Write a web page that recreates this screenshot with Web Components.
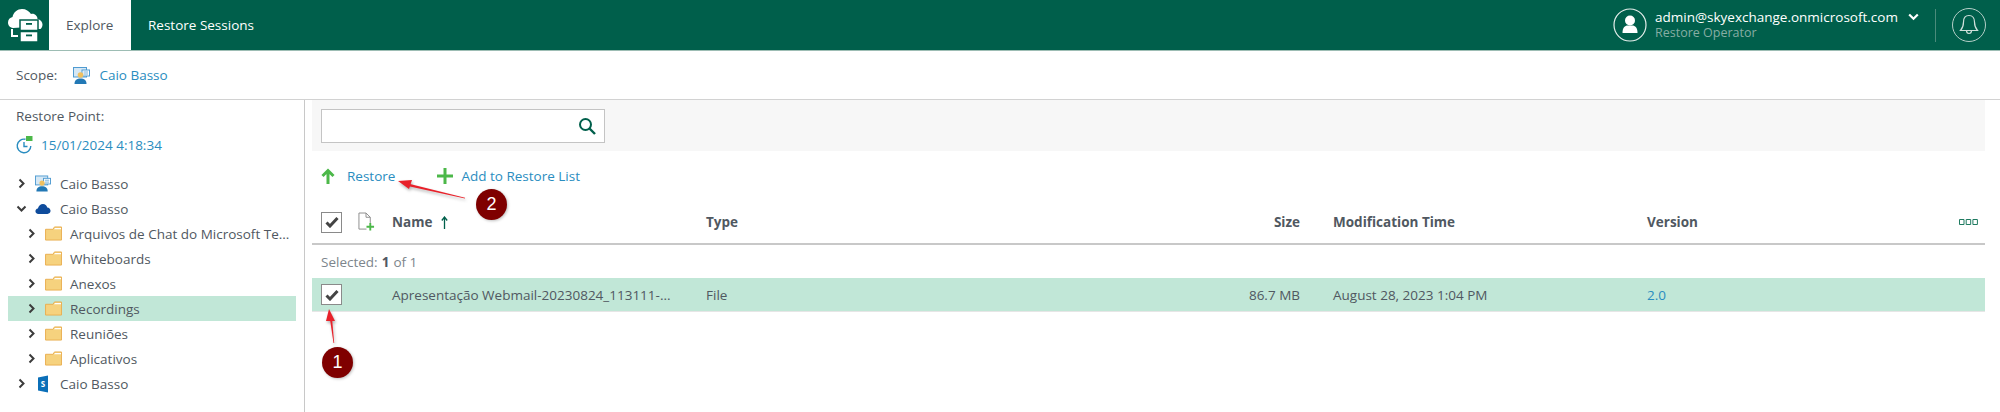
<!DOCTYPE html>
<html>
<head>
<meta charset="utf-8">
<title>Explore</title>
<style>
	html, body { margin: 0; padding: 0; background: #fff; }
	body { font: 13.5px "Open Sans", sans-serif; color: #505861; width: 2000px; height: 412px; overflow: hidden; position: relative; }
	.body-row { display: flex; height: 312px; }
</style>
</head>
<body>
<app-header></app-header>
<scope-bar></scope-bar>
<div class="body-row">
	<side-tree></side-tree>
	<file-pane></file-pane>
</div>
<call-outs></call-outs>

<script>
const ICONS = {
	mailbox: `<svg width="17" height="17" viewBox="0 0 17 17">
		<rect x="0.500" y="0.500" width="13" height="9.500" fill="#d6e8f5" stroke="#4f9bd1"/>
		<rect x="9" y="3" width="7.500" height="6" fill="#fff" stroke="#4f9bd1"/><path d="M10.500 5h4.500M10.500 7h4.500" stroke="#4f9bd1" stroke-width=".8"/>
		<circle cx="7.500" cy="8" r="2.800" fill="#f0c060"/><path d="M1.500 17c0-4 2.500-5.500 6-5.500s6 1.500 6 5.500z" fill="#2278b5"/></svg>`,
	cloud: `<svg width="17" height="12" viewBox="0 0 18 12"><path d="M4 11.500C1.500 11.500.5 10 .5 8.500c0-1.500 1-2.800 2.700-3C4 2.500 6.300.5 9 .5c2.500 0 4 1.500 4.800 3.700 2 .2 3.700 1.800 3.700 3.900 0 2-1.500 3.400-3.500 3.400z" fill="#0f4c9c"/></svg>`,
	share: `<svg width="12" height="18" viewBox="0 0 12 18"><path d="M1 2.500 11 .5v17l-10-2z" fill="#0b6fb8"/><text x="6" y="12" font-family="Open Sans" font-size="8" font-weight="700" text-anchor="middle" fill="#fff">S</text></svg>`,
	folder: `<svg width="17" height="15" viewBox="0 0 18 16"><path d="M.5 3.500h8l1.500-2.500h7.500v14H.5z" fill="#f6d27e" stroke="#e9ae4f"/><path d="M9.500 3.500 10.700 2H17v1.500z" fill="#fff"/></svg>`
};

class AppHeader extends HTMLElement {
	constructor() {
		super();
		this.attachShadow({ mode: "open" });
		this.shadowRoot.innerHTML = `
			<style>
				:host { display: flex; height: 51px; background: #005f4b; border-bottom: 1px solid #9dbdb4; box-sizing: border-box; color: #fff; font-size: 13.5px; }
				.logo { width: 49px; display: flex; align-items: center; justify-content: center; }
				.tab { display: flex; align-items: center; padding: 0 17px; }
				.tab.on { background: #fff; color: #505861; width: 82px; box-sizing: border-box; }
				.grow { flex: 1; }
				.user { display: flex; align-items: center; }
				.avatar { width: 34px; height: 34px; margin-right: 8px; }
				.who { line-height: 16px; width: 280px; }
				.mail { display: flex; align-items: center; gap: 10px; white-space: nowrap; }
				.mail svg { flex: none; }
				.role { color: #86ada3; font-size: 12.5px; }
				.sep { width: 1px; height: 33px; background: #4b8b7b; margin-right: 16px; }
				.bell { width: 34px; height: 34px; margin-right: 14px; }
			</style>
			<div class="logo">
				<svg width="36" height="36" viewBox="0 0 36 36">
					<path d="M6 21C2.500 20.500 1 18 1 15.500 1 12.500 3 10.500 5.500 10 6.500 5 10.500 2 15 2c4 0 7 2 9 5 1-.5 2-.5 3 0 2.500 1 3.500 3 3.500 5 3 .5 5 3 5 5.500 0 2-1 3.500-2 4.500H14v-1.500z" fill="#fff"/>
					<rect x="13" y="13" width="18" height="10.500" fill="#fff" stroke="#005f4b" stroke-width="1.500"/>
					<rect x="13" y="24.500" width="18" height="10.500" fill="#fff" stroke="#005f4b" stroke-width="1.500"/>
					<rect x="19" y="16" width="6" height="1.800" fill="#005f4b"/><rect x="19" y="27.500" width="6" height="1.800" fill="#005f4b"/>
					<path d="M5 22v7h6" fill="none" stroke="#fff" stroke-width="2"/>
				</svg>
			</div>
			<div class="tab on">Explore</div>
			<div class="tab">Restore Sessions</div>
			<div class="grow"></div>
			<div class="user">
				<svg class="avatar" viewBox="0 0 34 34"><circle cx="17" cy="17" r="16" fill="none" stroke="#e4eeeb" stroke-width="1.200"/><circle cx="17" cy="12.500" r="5" fill="#fff"/><path d="M9.500 25c0-5 2-7 4.500-7.500h6c2.500.5 4.500 2.500 4.500 7.500z" fill="#fff"/></svg>
				<div class="who">
					<div class="mail">admin@skyexchange.onmicrosoft.com
						<svg width="11" height="8" viewBox="0 0 11 8"><path d="M1.200 1.500 5.500 5.800 9.800 1.500" fill="none" stroke="#fff" stroke-width="2.200"/></svg>
					</div>
					<div class="role">Restore Operator</div>
				</div>
				<div class="sep"></div>
				<svg class="bell" viewBox="0 0 34 34"><circle cx="17" cy="17" r="16.500" fill="none" stroke="#b5cfc8" stroke-width="1"/><path d="M17 7.500c-3.500 0-5.500 2.800-5.500 6.500 0 4-.8 6-3 8.500h17c-2.200-2.500-3-4.500-3-8.500 0-3.700-2-6.500-5.500-6.500zM14.500 22.500c0 2 1 3 2.500 3s2.500-1 2.500-3" fill="none" stroke="#cfe0db" stroke-width="1.200"/></svg>
			</div>`;
	}
}

class ScopeBar extends HTMLElement {
	constructor() {
		super();
		this.attachShadow({ mode: "open" });
		this.shadowRoot.innerHTML = `
			<style>
				:host { display: flex; align-items: center; height: 49px; box-sizing: border-box; border-bottom: 1px solid #d2d2d2; padding: 0 0 0 16px; color: #505861; font-size: 13.5px; }
				.ico { margin: 0 9px 0 16px; display: flex; }
				a { color: #2a8dc0; }
			</style>
			<span>Scope:</span><span class="ico">${ICONS.mailbox}</span><a>Caio Basso</a>`;
	}
}

class TreeItem extends HTMLElement {
	constructor() {
		super();
		this.attachShadow({ mode: "open" });
		const level = +this.getAttribute("level") || 0;
		const open = this.hasAttribute("open");
		const sel = this.hasAttribute("selected");
		const icon = ICONS[this.getAttribute("icon")] || "";
		const chev = open ? "M1.500 3.500 5.500 7.500 9.500 3.500" : "M3.500 1.500 7.500 5.500 3.500 9.500";
		this.shadowRoot.innerHTML = `
			<style>
				:host { display: flex; align-items: center; height: 25px; font-size: 13.5px; color: #505861; white-space: nowrap; margin: 0 8px; padding-left: ${level ? 18 : 8}px; ${sel ? "background:#c1e7d7;" : ""} }
				svg.chev { flex: none; margin-right: 8px; }
				.ico { flex: none; width: ${level ? 17 : 16}px; display: flex; justify-content: center; margin-right: ${level ? 8 : 9}px; }
			</style>
			<svg class="chev" width="11" height="11" viewBox="0 0 11 11"><path d="${chev}" fill="none" stroke="#3c3c3c" stroke-width="2"/></svg>
			<span class="ico">${icon}</span><span><slot></slot></span>`;
	}
}

class SideTree extends HTMLElement {
	constructor() {
		super();
		this.attachShadow({ mode: "open" });
		const rows = [
			['mailbox', 0, '', 'Caio Basso'],
			['cloud', 0, 'open', 'Caio Basso'],
			['folder', 1, '', 'Arquivos de Chat do Microsoft Te...'],
			['folder', 1, '', 'Whiteboards'],
			['folder', 1, '', 'Anexos'],
			['folder', 1, 'selected', 'Recordings'],
			['folder', 1, '', 'Reuniões'],
			['folder', 1, '', 'Aplicativos'],
			['share', 0, '', 'Caio Basso']
		];
		this.shadowRoot.innerHTML = `
			<style>
				:host { display: block; width: 305px; flex: none; box-sizing: border-box; border-right: 1px solid #c8c8c8; font-size: 13.5px; color: #505861; }
				.label { padding: 7px 0 0 16px; line-height: 18px; }
				.point { display: flex; align-items: center; gap: 8px; padding: 11px 0 0 16px; color: #2a8dc0; line-height: 18px; margin-bottom: 17px; }
			</style>
			<div class="label">Restore Point:</div>
			<div class="point">
				<svg width="17" height="18" viewBox="0 0 17 18"><path d="M9.500 3.300A6.800 6.800 0 1 0 14.800 10" fill="none" stroke="#2a8dc0" stroke-width="1.400"/><path d="M8 6v4.500h3.500" fill="none" stroke="#2a8dc0" stroke-width="1.400"/><path d="M10 0h6.500v5H10z" fill="#4cb849"/></svg>
				<span>15/01/2024 4:18:34</span>
			</div>
			${rows.map(r => `<tree-item icon="${r[0]}" level="${r[1]}" ${r[2]}>${r[3]}</tree-item>`).join("")}`;
	}
}

const CHECK = `<svg width="14" height="12" viewBox="0 0 14 12"><path d="M1.500 6.500 5 10 12.500 2" fill="none" stroke="#444" stroke-width="3"/></svg>`;

class CheckBox extends HTMLElement {
	constructor() {
		super();
		this.attachShadow({ mode: "open" });
		this.shadowRoot.innerHTML = `
			<style>
				:host { display: flex; align-items: center; justify-content: center; width: 21px; height: 21px; box-sizing: border-box; border: 1px solid #8a8a8a; background: #fff; }
			</style>${CHECK}`;
	}
}

class FilePane extends HTMLElement {
	constructor() {
		super();
		this.attachShadow({ mode: "open" });
		this.shadowRoot.innerHTML = `
			<style>
				:host { display: block; flex: 1; font-size: 13.5px; color: #505861; padding: 0 15px 0 7px; min-width: 0; }
				.search { height: 51px; background: #f7f7f7; display: flex; align-items: center; padding-left: 9px; }
				.box { width: 284px; height: 34px; box-sizing: border-box; border: 1px solid #c4c4c4; background: #fff; display: flex; align-items: center; justify-content: flex-end; padding-right: 8px; }
				.actions { display: flex; align-items: center; height: 50px; padding-left: 9px; color: #2a8dc0; }
				.actions svg { flex: none; }
				.r1 { margin: 0 41px 0 12px; }
				.r2 { margin-left: 7px; }
				.head, .row { display: grid; grid-template-columns: 80px 314px 1fr 33px 314px 338px; align-items: center; }
				.head { height: 42px; border-bottom: 2px solid #c8c8c8; font-weight: 700; }
				.first { display: flex; align-items: center; padding-left: 9px; }
				.first svg { margin-left: 16px; }
				.name { display: flex; align-items: center; gap: 9px; }
				.right { text-align: right; }
				.sel { height: 33px; display: flex; align-items: center; padding-left: 9px; color: #7d858c; }
				.sel b { color: #505861; font-weight: 700; margin: 0 4px; }
				.row { height: 34px; background: #c1e7d7; border-bottom: 1px solid #e6e6e6; box-sizing: border-box; }
				.cols { display: flex; justify-content: space-between; align-items: center; }
				.cols svg { margin-right: 7px; }
				a { color: #2a8dc0; }
			</style>
			<div class="search"><div class="box">
				<svg width="18" height="18" viewBox="0 0 18 18"><circle cx="7.500" cy="7.500" r="5.500" fill="none" stroke="#005f4b" stroke-width="2"/><path d="M11.500 11.500 17 17" stroke="#005f4b" stroke-width="2.400"/></svg>
			</div></div>
			<div class="actions">
				<svg width="14" height="16" viewBox="0 0 14 16"><path d="M7 16V2.500M1.500 8 7 2.500 12.500 8" fill="none" stroke="#4cb849" stroke-width="3"/></svg>
				<span class="r1">Restore</span>
				<svg width="18" height="18" viewBox="0 0 18 18"><path d="M7.500 1h3v6.500H17v3h-6.500V17h-3v-6.500H1v-3h6.500z" fill="#4cb849"/></svg>
				<span class="r2">Add to Restore List</span>
			</div>
			<div class="head">
				<div class="first"><check-box></check-box>
					<svg width="17" height="20" viewBox="0 0 18 20"><path d="M1 .5h7.500L13 5v6M1 .5v17h8M8.500.5V5H13" fill="none" stroke="#8a8a8a"/><path d="M13 11v8M9 15h8" stroke="#4cb849" stroke-width="2"/></svg>
				</div>
				<div class="name">Name <svg width="7" height="13" viewBox="0 0 7 13"><path d="M3.500 13V1.500M.8 4.500l2.700-3.500 2.700 3.500" fill="none" stroke="#005f4b" stroke-width="1.300"/></svg></div>
				<div>Type</div>
				<div class="right" style="grid-column:3">Size</div>
				<div style="grid-column:5">Modification Time</div>
				<div class="cols" style="grid-column:6"><span>Version</span>
					<svg width="19" height="6" viewBox="0 0 19 6"><path d="M.5.500h4.500v5H.5zM7.200.500h4.500v5H7.200zM13.900.500h4.500v5h-4.500z" fill="none" stroke="#1f7a60"/></svg>
				</div>
			</div>
			<div class="sel">Selected:<b>1</b>of 1</div>
			<div class="row">
				<div class="first"><check-box></check-box></div>
				<div>Apresentação Webmail-20230824_113111-...</div>
				<div>File</div>
				<div class="right" style="grid-column:3">86.7 MB</div>
				<div style="grid-column:5">August 28, 2023 1:04 PM</div>
				<div style="grid-column:6"><a>2.0</a></div>
			</div>`;
		// Type and Size share the flexible column, one at each end
		this.shadowRoot.querySelectorAll(".head, .row").forEach(grid => {
			const type = grid.children[2];
			const size = grid.children[3];
			type.style.gridArea = "1 / 3";
			size.style.gridArea = "1 / 3";
		});
	}
}

class CallOuts extends HTMLElement {
	constructor() {
		super();
		this.attachShadow({ mode: "open" });
		this.shadowRoot.innerHTML = `
			<style>
				:host { display: block; position: absolute; inset: 0; pointer-events: none; }
				svg.lines { position: absolute; inset: 0; overflow: visible; filter: drop-shadow(1px 2px 1.500px rgba(0,0,0,.3)); }
				.num { position: absolute; width: 31px; height: 31px; border-radius: 50%; background: #7f0000; color: #fff; font: 18px "Liberation Sans", sans-serif; display: flex; align-items: center; justify-content: center; box-shadow: 1px 1px 3px rgba(0,0,0,.25); }
			</style>
			<svg class="lines" width="2000" height="412">
				<path d="M465 197.800 408 183.500 407.500 186 465 198.400z" fill="#e8212a"/>
				<path d="M398 181 412 180 409 189z" fill="#e8212a"/>
				<path d="M333.500 343 329.800 318 332 318 334.200 343z" fill="#e8212a"/>
				<path d="M329 309 335 321 326 321z" fill="#e8212a"/>
			</svg>
			<div class="num" style="left:322px;top:347px">1</div>
			<div class="num" style="left:476px;top:189px">2</div>`;
	}
}

customElements.define("app-header", AppHeader);
customElements.define("scope-bar", ScopeBar);
customElements.define("tree-item", TreeItem);
customElements.define("side-tree", SideTree);
customElements.define("check-box", CheckBox);
customElements.define("file-pane", FilePane);
customElements.define("call-outs", CallOuts);
</script>
</body>
</html>
